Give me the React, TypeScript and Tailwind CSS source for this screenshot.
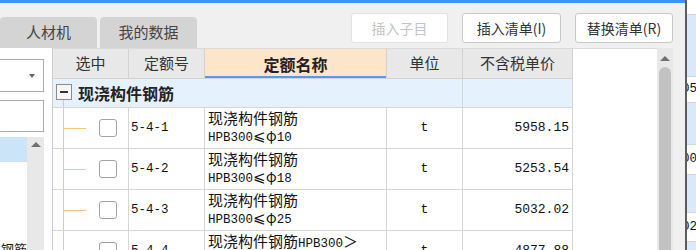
import type { ReactNode } from "react";

/** Quota selection panel: toolbar, side tree and the quota grid. */

const mono = "font-['Liberation_Mono','Noto_Sans_CJK_SC',monospace]";

type Row = { code: string; spec: string; price: string; over?: boolean };

const rows: Row[] = [
  { code: "5-4-1", spec: "10", price: "5958.15" },
  { code: "5-4-2", spec: "18", price: "5253.54" },
  { code: "5-4-3", spec: "25", price: "5032.02" },
  { code: "5-4-4", spec: "10", price: "4877.88", over: true },
];

function Tab({ children }: { children: ReactNode }) {
  return (
    <div className="flex h-[31px] w-[97px] items-center justify-center rounded-t-[4px] bg-[#d4d4d4] text-[15px] text-[#444]">
      {children}
    </div>
  );
}

function Btn({
  w,
  disabled,
  children,
}: {
  w: string;
  disabled?: boolean;
  children: ReactNode;
}) {
  return (
    <button
      type="button"
      className={
        disabled
          ? `${w} flex h-[30px] items-center justify-center rounded-[3px] border border-[#e2e2e2] bg-white text-[14px] text-[#c4c4c4]`
          : `${w} flex h-[30px] items-center justify-center rounded-[3px] border border-[#c9c9c9] bg-white text-[14px] text-[#333]`
      }
    >
      {children}
    </button>
  );
}

function HeadCell({
  w,
  active,
  children,
}: {
  w: string;
  active?: boolean;
  children: ReactNode;
}) {
  return (
    <div
      className={
        active
          ? `${w} flex h-full items-center justify-center border-r border-[#d2d2d2] bg-[#fde5c9] text-[16px] font-bold text-[#222] shadow-[inset_0_-2px_0_#4f9cf0]`
          : `${w} flex h-full items-center justify-center border-r border-[#d2d2d2] bg-[#e8e8e8] text-[15px] text-[#333]`
      }
    >
      {children}
    </div>
  );
}

function LeftPanel() {
  return (
    <div className="flex w-[53px] flex-col border-r border-[#cdcdcd] bg-white">
      <div className="mt-[11px] flex h-[33px] w-[44px] shrink-0 items-center justify-end border-y border-r border-[#adadad] pr-[8px]">
        <div className="h-0 w-0 border-x-[3px] border-t-[4px] border-x-transparent border-t-[#666]" />
      </div>
      <div className="mt-[8px] h-[32px] w-[44px] shrink-0 border-y border-r border-[#adadad]" />
      <div className="mt-[5px] flex w-[44px] flex-1">
        <div className="flex w-[27px] flex-col">
          <div className="h-[25px] shrink-0 bg-[#cce4f7]" />
          <div className="mt-[79px] flex shrink-0 justify-end overflow-hidden whitespace-nowrap text-[13px] leading-[16px] text-[#222]">
            构件钢筋
          </div>
        </div>
        <div className="flex w-[17px] flex-col items-center bg-[#e8e8e8] pt-[5px]">
          <div className="h-0 w-0 border-x-[5px] border-b-[5px] border-x-transparent border-b-[#707070]" />
        </div>
      </div>
    </div>
  );
}

function GroupRow() {
  return (
    <div className="flex h-[29px] w-[520px] shrink-0 border-b border-[#d6d6d6] bg-[#e5f2fd]">
      <div className="flex w-[410px] border-r border-[#d6d6d6] pl-[3px]">
        <div className="flex flex-col pt-[5px]">
          <div className="flex h-[16px] w-[16px] shrink-0 items-center justify-center border border-[#8c8c8c] bg-[#f6f6f6]">
            <div className="h-[2px] w-[8px] bg-[#333]" />
          </div>
          <div className="ml-[7px] flex-1 border-l border-[#f6c47e]" />
        </div>
        <div className="ml-[6px] flex items-center text-[16px] font-bold text-[#222]">
          现浇构件钢筋
        </div>
      </div>
      <div className="w-[110px] border-r border-[#d6d6d6]" />
    </div>
  );
}

function DataRow({ row }: { row: Row }) {
  return (
    <div className="flex h-[41px] w-[520px] shrink-0 border-b border-[#d6d6d6] text-[#111]">
      <div className="flex w-[76px] border-r border-[#d6d6d6] pl-[10px]">
        <div className="flex items-center border-l border-[#f6c47e]">
          <div className="w-[22px] border-t border-[#f6c47e]" />
          <div className="ml-[13px] h-[18px] w-[18px] shrink-0 rounded-[3px] border border-[#a3a3a3] bg-white" />
        </div>
      </div>
      <div className={`flex w-[76px] items-center border-r border-[#d6d6d6] pl-[2px] text-[12.5px] ${mono}`}>
        {row.code}
      </div>
      <div className="flex w-[182px] flex-col justify-center border-r border-[#d6d6d6] pl-[3px] text-[15px] leading-[17px]">
        {row.over ? (
          <>
            <div className="whitespace-nowrap">
              现浇构件钢筋<span className={`text-[12.5px] ${mono}`}>HPB300</span>＞
            </div>
            <div className={`text-[12.5px] ${mono}`}>φ{row.spec}</div>
          </>
        ) : (
          <>
            <div>现浇构件钢筋</div>
            <div className="whitespace-nowrap">
              <span className={`text-[12.5px] ${mono}`}>HPB300</span>⩽
              <span className="text-[14px]">φ</span>
              <span className={`text-[12.5px] ${mono}`}>{row.spec}</span>
            </div>
          </>
        )}
      </div>
      <div className={`flex w-[76px] items-center justify-center border-r border-[#d6d6d6] text-[13px] ${mono}`}>
        t
      </div>
      <div className={`flex w-[110px] items-center justify-end border-r border-[#d6d6d6] pr-[3px] text-[13px] ${mono}`}>
        {row.price}
      </div>
    </div>
  );
}

function QuotaTable() {
  return (
    <div className="flex w-[604px] flex-col overflow-hidden border-t border-[#dadada] bg-white">
      <div className="flex h-[30px] w-[520px] shrink-0 border-b border-[#d2d2d2]">
        <HeadCell w="w-[76px]">选中</HeadCell>
        <HeadCell w="w-[76px]">定额号</HeadCell>
        <HeadCell w="w-[182px]" active>
          定额名称
        </HeadCell>
        <HeadCell w="w-[76px]">单位</HeadCell>
        <HeadCell w="w-[110px]">不含税单价</HeadCell>
      </div>
      <GroupRow />
      {rows.map((r) => (
        <DataRow key={r.code} row={r} />
      ))}
    </div>
  );
}

function Scrollbar() {
  return (
    <div className="flex w-[16px] flex-col items-center bg-[#e8e8e8] pt-[8px]">
      <div className="h-0 w-0 border-x-[5px] border-b-[5px] border-x-transparent border-b-[#6e6e6e]" />
      <div className="mt-[6px] w-[12px] flex-1 rounded-t-full bg-[#c2c2c2]" />
    </div>
  );
}

function SideStrip() {
  return (
    <div className={`flex flex-1 flex-col overflow-hidden bg-white text-[12.5px] text-[#111] ${mono}`}>
      <div className="h-[15px] shrink-0 border-b border-[#d6d6d6]" />
      <div className="h-[62px] shrink-0 border-b border-[#d6d6d6] bg-[#dbe8f9]" />
      <div className="-ml-[5px] flex h-[26px] shrink-0 items-center whitespace-nowrap border-b border-[#d6d6d6]">05</div>
      <div className="h-[42px] shrink-0 border-b border-[#d6d6d6] bg-[#dbe8f9]" />
      <div className="-ml-[5px] flex h-[30px] shrink-0 items-center whitespace-nowrap border-b border-[#d6d6d6]">00</div>
      <div className="h-[38px] shrink-0 border-b border-[#d6d6d6] bg-[#dbe8f9]" />
      <div className="-ml-[5px] flex h-[29px] shrink-0 items-center whitespace-nowrap border-b border-[#d6d6d6]">02</div>
      <div className="flex-1 bg-[#dbe8f9]" />
    </div>
  );
}

export default function App() {
  return (
    <div className="flex h-[250px] w-[696px] overflow-hidden bg-[#f0f0f0] font-['Noto_Sans_CJK_SC',sans-serif]">
      <div className="flex w-[685px] flex-col">
        <div className="h-[3px] shrink-0 bg-[#3f93f2]" />
        <div className="flex h-[45px] shrink-0 justify-between pr-[12px]">
          <div className="flex items-end gap-[3px]">
            <Tab>人材机</Tab>
            <Tab>我的数据</Tab>
          </div>
          <div className="mt-[10px] flex gap-[14px]">
            <Btn w="w-[97px]" disabled>
              插入子目
            </Btn>
            <Btn w="w-[99px]">插入清单(I)</Btn>
            <Btn w="w-[98px]">替换清单(R)</Btn>
          </div>
        </div>
        <div className="flex min-h-0 flex-1">
          <LeftPanel />
          <QuotaTable />
          <Scrollbar />
        </div>
      </div>
      <div className="w-[2px] bg-[#5c5c5c]" />
      <SideStrip />
    </div>
  );
}
